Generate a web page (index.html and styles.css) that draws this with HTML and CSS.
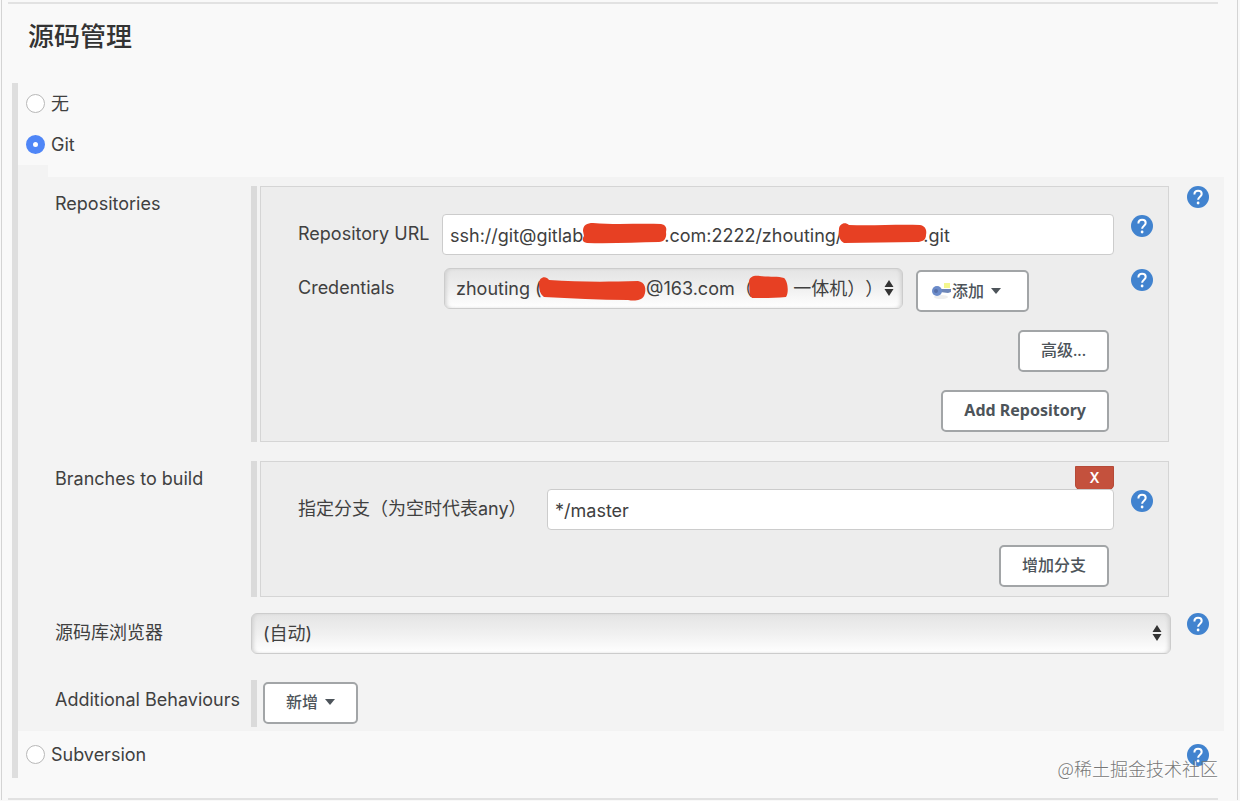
FILE: index.html
```
<!DOCTYPE html>
<html lang="zh-CN">
<head>
    <meta charset="UTF-8">
    <meta name="viewport" content="width=device-width, initial-scale=1.0">
    <title>源码管理</title>
    <link rel="stylesheet" href="styles.css">
</head>
<body>
    <svg class="sprite" aria-hidden="true">
        <symbol id="help-icon" viewBox="0 0 22 22">
            <circle cx="11" cy="11" r="11" fill="#4183cf"/>
            <path d="M7.4 8.4C7.4 6 9 4.8 11.1 4.8S14.7 6 14.7 8C14.7 10.6 11.1 10.8 11.1 13.8" fill="none" stroke="#fff" stroke-width="2"/>
            <circle cx="11.1" cy="17" r="1.4" fill="#fff"/>
        </symbol>
    </svg>

    <main class="config">
        <h1 class="title">源码管理</h1>

        <form class="scm">
            <div class="radio-row">
                <input type="radio" name="scm" id="scm-none">
                <label for="scm-none">无</label>
            </div>
            <div class="radio-row">
                <input type="radio" name="scm" id="scm-git" checked>
                <label for="scm-git">Git</label>
            </div>

            <div class="git-tab"></div>
            <div class="git">
                <div class="row">
                    <span class="name">Repositories</span>
                    <div class="list">
                        <div class="box repo-box">
                            <div class="field">
                                <label class="repo-label" for="repo-url">Repository URL</label>
                                <div class="control">
                                    <input class="text" type="text" id="repo-url" value="ssh://git@gitlab                .com:2222/zhouting/                .git">
                                    <svg class="mask" width="520" height="40" viewBox="0 0 520 40">
                                        <path d="M141 17C141 11 145 9 151 9C175 11 198 9 219 10C224 11 225 14 224 18C225 24 222 28 217 28C194 28 171 30 145 29C140 28 140 25 142 22Z"/>
                                        <path d="M397 15C397 10 403 7 407 11C432 12 455 10 478 11C484 12 485 17 484 21C484 26 480 28 475 28C450 28 426 29 402 29C398 27 396 22 397 15Z"/>
                                    </svg>
                                </div>
                                <button class="help" type="button" aria-label="Help"><svg><use href="#help-icon"/></svg></button>
                            </div>
                            <div class="field">
                                <label class="repo-label" for="credentials">Credentials</label>
                                <div class="control credentials">
                                    <div class="select">
                                        <select id="credentials">
                                            <option>zhouting (&nbsp;&nbsp;&nbsp;&nbsp;&nbsp;&nbsp;&nbsp;&nbsp;&nbsp;&nbsp;&nbsp;&nbsp;&nbsp;&nbsp;&nbsp;&nbsp;&nbsp;&nbsp;&nbsp;&nbsp;&thinsp;@163.com（&nbsp;&nbsp;&nbsp;&nbsp;&nbsp;&nbsp;&nbsp;&nbsp;一体机））</option>
                                        </select>
                                        <svg class="arrows" width="10" height="16" viewBox="0 0 10 16"><path d="M5 0L9.5 7H.5ZM5 16L.5 9H9.5Z"/></svg>
                                        <svg class="mask" width="350" height="40" viewBox="0 0 350 40">
                                            <path d="M95 15C95 9 102 7 105 12C134 14 162 14 194 13C201 14 203 21 200 28C197 33 190 33 184 32C155 32 127 30 100 29C96 26 95 22 95 15Z"/>
                                            <path d="M305 14C305 8 311 7 316 8C325 9 334 8 340 10C344 13 345 25 342 29C331 30 318 30 308 30C304 26 306 20 305 14Z"/>
                                        </svg>
                                    </div>
                                    <button class="btn add-credentials" type="button">
                                        <svg class="key" width="20" height="18" viewBox="0 0 20 18">
                                            <path d="M12 1H18V6H12Z" fill="#f4f78e"/>
                                            <ellipse cx="9" cy="15" rx="7" ry="2" fill="#eee"/>
                                            <path d="M8 7L19 7V10L16 11L8 10Z" fill="#6d86b8"/>
                                            <circle cx="5" cy="9" r="5" fill="#6b8bc9"/>
                                            <circle cx="4" cy="9" r="2" fill="#566fa8"/>
                                        </svg>添加<span class="caret"></span>
                                    </button>
                                </div>
                                <button class="help" type="button" aria-label="Help"><svg><use href="#help-icon"/></svg></button>
                            </div>
                            <div class="actions">
                                <button class="btn" type="button">高级...</button>
                                <button class="btn btn-latin" type="button">Add Repository</button>
                            </div>
                        </div>
                    </div>
                    <button class="help" type="button" aria-label="Help"><svg><use href="#help-icon"/></svg></button>
                </div>

                <div class="row branches-row">
                    <span class="name">Branches to build</span>
                    <div class="list">
                        <div class="box branch-box">
                            <button class="delete" type="button">X</button>
                            <div class="field">
                                <label class="branch-label" for="branch">指定分支（为空时代表any）</label>
                                <div class="control">
                                    <input class="text" type="text" id="branch" value="*/master">
                                </div>
                                <button class="help" type="button" aria-label="Help"><svg><use href="#help-icon"/></svg></button>
                            </div>
                            <div class="actions">
                                <button class="btn" type="button">增加分支</button>
                            </div>
                        </div>
                    </div>
                </div>

                <div class="row browser-row">
                    <label class="name" for="browser">源码库浏览器</label>
                    <div class="select">
                        <select id="browser">
                            <option>(自动)</option>
                        </select>
                        <svg class="arrows" width="10" height="16" viewBox="0 0 10 16"><path d="M5 0L9.5 7H.5ZM5 16L.5 9H9.5Z"/></svg>
                    </div>
                    <button class="help" type="button" aria-label="Help"><svg><use href="#help-icon"/></svg></button>
                </div>

                <div class="row behaviours-row">
                    <span class="name">Additional Behaviours</span>
                    <div class="list">
                        <button class="btn" type="button">新增<span class="caret"></span></button>
                    </div>
                </div>
            </div>

            <div class="radio-row svn-row">
                <input type="radio" name="scm" id="scm-svn">
                <label for="scm-svn">Subversion</label>
                <button class="help" type="button" aria-label="Help"><svg><use href="#help-icon"/></svg></button>
            </div>
        </form>
        <div class="watermark">@稀土掘金技术社区</div>
    </main>
</body>
</html>
```
FILE: styles.css
```
* {
    box-sizing: border-box;
}

body {
    margin: 0;
    background: #f9f9f9;
    color: #404040;
    font: 18px/24px Inter, "Noto Sans CJK SC", sans-serif;
}

button, input, select {
    margin: 0;
    color: inherit;
    font: inherit;
}

.sprite {
    display: none;
}

.config {
    position: relative;
    margin: 0 2px 0 1px;
    padding: 2px 13px 0 10px;
    border: solid #d4d4d4;
    border-width: 0 1px;
}

.config::before,
.config::after {
    content: "";
    display: block;
    height: 2px;
    margin: 0 6px 0 -4px;
    background: #e2e2e2;
}

.config::after {
    margin-top: 20px;
    margin-bottom: 1px;
}

.title {
    margin: 14px 0 27px 16px;
    color: #333;
    font-size: 26px;
    font-weight: 500;
    line-height: 38px;
}

.scm {
    border-left: 6px solid #dedede;
}

/* Radio buttons */
.radio-row {
    display: flex;
    align-items: center;
    gap: 6px;
    height: 41px;
    padding-left: 8px;
}

.radio-row input {
    appearance: none;
    width: 19px;
    height: 19px;
    border: 1px solid #b8b8b8;
    border-radius: 50%;
    background: #fff;
}

.radio-row input:checked {
    border: 7px solid #4f86f7;
}

.svn-row {
    height: 47px;
}

.svn-row .help {
    margin-left: auto;
    margin-right: 15px;
}

/* Git section */
.git-tab {
    width: 30px;
    height: 12px;
    background: #f3f3f3;
}

.git {
    padding: 9px 15px 4px 37px;
    background: #f3f3f3;
}

.row {
    display: grid;
    grid-template-columns: 196px 1fr 22px;
    align-items: start;
    margin-bottom: 19px;
}

.name {
    padding-top: 6px;
}

.list {
    margin-right: 18px;
    padding-left: 3px;
    border-left: 6px solid #dadada;
}

.row > .select {
    margin-right: 16px;
}

.box {
    border: 1px solid #d5d5d5;
    background: #ededed;
}

.repo-box {
    padding: 27px 15px 9px 37px;
}

.branch-box {
    padding: 4px 15px 9px 37px;
}

.field {
    display: flex;
    align-items: flex-start;
    margin-bottom: 13px;
}

.field > label {
    padding-top: 8px;
}

.field > .help {
    margin-top: 1px;
}

.repo-label {
    width: 144px;
}

.branch-label {
    width: 249px;
}

.control {
    position: relative;
    flex: 1;
    margin-right: 17px;
}

.text {
    display: block;
    width: 100%;
    height: 41px;
    padding: 1px 7px 0;
    border: 1px solid #ccc;
    border-radius: 4px;
    background: #fff;
}

.credentials {
    display: flex;
    gap: 13px;
    padding-left: 2px;
}

.select {
    position: relative;
}

.credentials .select {
    flex: 0 1 459px;
}

.select select {
    display: block;
    appearance: none;
    width: 100%;
    height: 41px;
    padding: 0 30px 0 11px;
    border: 1px solid #ccc;
    border-radius: 6px;
    background: linear-gradient(#e4e4e4, #f0f0f0 50%, #fff);
    box-shadow: inset 3px 0 4px -2px #ccc, inset -3px 0 4px -2px #ccc;
    text-spacing-trim: space-all;
}

.arrows {
    position: absolute;
    top: 12px;
    right: 9px;
    fill: #333;
}

.mask {
    position: absolute;
    top: 0;
    left: 0;
    fill: #e74023;
    pointer-events: none;
}

/* Buttons */
.btn {
    display: flex;
    align-items: center;
    height: 42px;
    padding: 0 21px 2px;
    border: 2px solid #a2a5a7;
    border-radius: 5px;
    background: #fff;
    color: #4d545a;
    font: 500 16px/24px "Noto Sans", "Noto Sans CJK SC", sans-serif;
}

.btn-latin {
    font-weight: 700;
}

.add-credentials {
    margin-top: 2px;
    padding: 0 26px 0 14px;
}

.caret {
    margin-left: 7px;
    border: 5px solid transparent;
    border-top: 6px solid #4d545a;
    border-bottom: 0;
}

.actions {
    display: flex;
    flex-direction: column;
    align-items: flex-end;
    gap: 18px;
    margin-right: 44px;
}

.repo-box .actions {
    margin-top: 18px;
}

.branch-box .actions {
    margin-top: 15px;
}

.delete {
    display: block;
    width: 39px;
    height: 24px;
    margin: 0 39px -1px auto;
    padding: 0;
    border: 1px solid #b54a38;
    border-radius: 0 0 5px 5px;
    background: #c4513d;
    color: #fff;
    font-size: 14px;
    font-weight: 600;
    line-height: 20px;
}

.help {
    flex: none;
    width: 22px;
    height: 22px;
    padding: 0;
    border: 0;
    background: none;
}

.help svg {
    display: block;
    width: 22px;
    height: 22px;
}

.branches-row {
    margin-bottom: 16px;
}

.browser-row {
    margin-bottom: 26px;
}

.behaviours-row {
    margin-bottom: 0;
}

.browser-row .name,
.behaviours-row .name {
    padding-top: 8px;
}

.behaviours-row .list {
    padding: 2px 0 3px 6px;
}

.watermark {
    position: absolute;
    right: 19px;
    bottom: 20px;
    color: #777;
    font: 300 18px/24px "Noto Sans CJK SC", sans-serif;
    text-shadow: 1px 1px 0 #fff;
}
```
